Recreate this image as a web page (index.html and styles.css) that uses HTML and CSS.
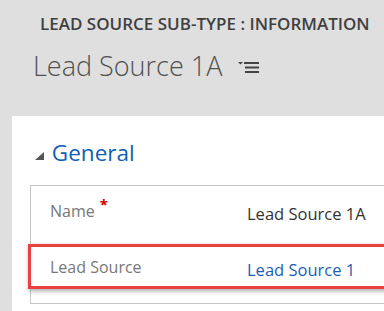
FILE: index.html
```html
<!DOCTYPE html>
<html lang="en">
<head>
  <meta charset="UTF-8" />
  <title>Lead Source Sub-Type : Information</title>
  <link rel="stylesheet" href="styles.css">
</head>
<body>

<header class="record-header">
  <div class="entity-title">LEAD SOURCE SUB-TYPE : INFORMATION</div>
  <div class="record-name">
    <span>Lead Source 1A</span>
    <svg class="form-menu" width="22" height="12" viewBox="0 0 22 12">
      <polygon points="0,1 5,1 2.5,3.5" fill="#444" />
      <rect x="6" y="1" width="15" height="2" fill="#444" />
      <rect x="7" y="5.5" width="14" height="2" fill="#444" />
      <rect x="7" y="10" width="14" height="2" fill="#444" />
    </svg>
  </div>
</header>

<main class="form-body">
  <section class="form-section">
    <h2 class="section-title">
      <svg class="toggle" width="9" height="8" viewBox="0 0 9 8">
        <polygon points="9,0 9,8 0,8" fill="#555" />
      </svg>
      General
    </h2>
    <div class="field-box">
      <div class="field-row">
        <label>Name<span class="required">*</span></label>
        <span class="field-value">Lead Source 1A</span>
      </div>
      <div class="field-row highlighted">
        <label>Lead Source</label>
        <a class="field-value lookup" href="#">Lead Source 1</a>
      </div>
    </div>
  </section>
</main>

</body>
</html>
```
FILE: styles.css
```css
body {
  font-family: "Open Sans", "Noto Sans", sans-serif;
  margin: 0;
  background-color: #dfdfdf;
  color: #444;
  overflow: hidden;
}
.record-header {
  padding: 14px 0 32px 0;
}
.entity-title {
  padding-left: 40px;
  font-size: 17px;
  font-weight: 600;
  line-height: 20px;
  color: #3f3f3f;
  white-space: nowrap;
  margin-bottom: 14px;
}
.record-name {
  padding-left: 33px;
  font-size: 27px;
  font-weight: 300;
  line-height: 36px;
  color: #505050;
  white-space: nowrap;
}
.form-menu {
  margin-left: 9px;
  vertical-align: 3px;
}
.form-body {
  margin-left: 12px;
  background-color: white;
  padding: 22px 0 7px 18px;
}
.section-title {
  margin: 0 0 17px 0;
  padding-left: 5px;
  font-size: 22.5px;
  font-weight: 400;
  line-height: 30px;
  color: #1160b7;
}
.toggle {
  vertical-align: 1px;
  margin-right: 2px;
}
.field-box {
  border: 1px solid #c6c6c6;
  border-right: none;
  padding: 2px 0 14px 0;
  display: flex;
  flex-direction: column;
  gap: 11px;
}
.field-row {
  width: 337px;
  margin-left: -3px;
  border: 3px solid transparent;
  padding: 10px 0 6px 19px;
  display: grid;
  grid-template-columns: 197px 1fr;
  line-height: 20px;
}
.field-row.highlighted {
  border-color: #e8413f;
  box-shadow: 1px 2px 5px rgba(0,0,0,0.35);
}
.field-row label {
  font-size: 16px;
  color: #777;
}
.required {
  color: #c00;
  font-weight: 700;
  font-size: 15px;
  position: relative;
  top: -7px;
  margin-left: 5px;
}
.field-value {
  font-size: 16.5px;
  color: #333;
  padding-top: 3px;
  white-space: nowrap;
}
.lookup {
  color: #1a5fb4;
  text-decoration: none;
}
```
